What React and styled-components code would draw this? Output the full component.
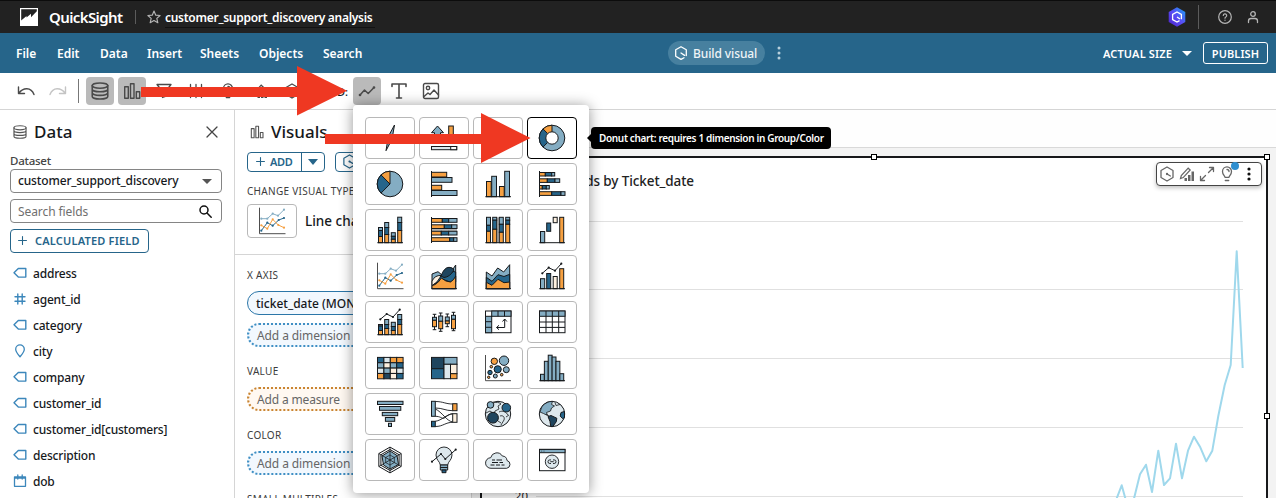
import React from "react";
import styled, { createGlobalStyle, css } from "styled-components";

const LIGHT = "#84adc3";
const DARK = "#26658a";
const ORANGE = "#f6a041";
const NAVY = "#1f455e";
const PALE = "#dde8ed";
const CREAM = "#fdf0df";
const INK = "#16191c";
const BRAND = "#26658a";

const Global = createGlobalStyle`
  * { box-sizing: border-box; }
  html, body { margin: 0; padding: 0; overflow: hidden; background: #fff; }
  body { font-family: "Noto Sans", "Open Sans", sans-serif; font-size: 12px; color: #16191c; }
  svg { display: block; flex: none; }
`;

const Page = styled.div`
  position: relative;
  width: 1276px;
  height: 498px;
  overflow: hidden;
  display: flex;
  flex-direction: column;
`;

const Text = styled.span`
  font-size: ${(p) => p.$size || 12}px;
  font-weight: ${(p) => p.$weight || 500};
  letter-spacing: ${(p) => p.$track || 0}px;
  color: ${(p) => p.$color || "inherit"};
  line-height: 1;
  padding-top: ${(p) => p.$drop || 0}px;
  white-space: nowrap;
`;

/* ---------- top bars ---------- */
const Header = styled.header`
  height: 33px;
  flex: none;
  background: #222;
  border-top: 1px solid #0c0c0c;
  display: flex;
  align-items: center;
  padding: 0 16px 0 20px;
  color: #fff;
`;
const Brand = styled.div`
  display: flex;
  align-items: center;
  gap: 11px;
  width: 115px;
`;
const HeaderRule = styled.div`
  width: 1px;
  height: ${(p) => p.$h}px;
  background: #5c5c5c;
  margin-left: ${(p) => p.$gap || 0}px;
`;
const TitleArea = styled.div`
  display: flex;
  align-items: center;
  gap: 4px;
  margin-left: 11px;
  flex: 1;
`;
const TitleField = styled.div`
  width: 210px;
  height: 22px;
  display: flex;
  align-items: center;
  border-bottom: 1px solid #121212;
`;
const HeaderTools = styled.div`
  display: flex;
  align-items: center;
`;
const HelpSlot = styled.div`
  display: flex;
  gap: 14px;
  margin-left: 19px;
`;

const MenuBar = styled.nav`
  height: 40px;
  flex: none;
  background: ${BRAND};
  display: flex;
  align-items: center;
  padding: 0 8px 0 16px;
  color: #fff;
`;
const MenuItem = styled.div`
  width: ${(p) => p.$w}px;
  padding-left: ${(p) => p.$inset || 0}px;
  display: flex;
`;
const BuildPill = styled.div`
  height: 24px;
  width: 97px;
  border-radius: 12px;
  background: #47809f;
  display: flex;
  align-items: center;
  padding-left: 6px;
  gap: 5px;
  margin-left: 284px;
`;
const MenuEnd = styled.div`
  margin-left: auto;
  display: flex;
  align-items: center;
`;
const PublishButton = styled.div`
  width: 65px;
  height: 22px;
  border: 1px solid #fff;
  border-radius: 3px;
  display: flex;
  align-items: center;
  justify-content: center;
  margin-left: 11px;
`;

const Toolbar = styled.div`
  height: 37px;
  flex: none;
  border-bottom: 1px solid #d5d5d5;
  display: flex;
  align-items: center;
  gap: 4px;
  padding-left: 12px;
  background: #fff;
`;
const ToolButton = styled.div`
  width: 28px;
  height: 28px;
  border-radius: 4px;
  display: flex;
  align-items: center;
  justify-content: center;
  background: ${(p) => (p.$active ? "#bababa" : "transparent")};
`;
const ToolRule = styled.div`
  width: 1px;
  height: 24px;
  background: #777;
  margin: 0 3px 0 2px;
`;
const AddLabel = styled.div`
  width: 39px;
  display: flex;
  justify-content: flex-end;
  padding: 0 1px 0 0;
`;

/* ---------- data pane ---------- */
const Body = styled.div`
  flex: 1;
  min-height: 0;
  display: flex;
`;
const DataPane = styled.aside`
  width: 235px;
  flex: none;
  border-right: 1px solid #d5d5d5;
  padding: 12px 12px 0 10px;
`;
const PaneHead = styled.div`
  display: flex;
  align-items: center;
  height: 20px;
  gap: 7px;
  padding: 0 4px 0 3px;
  svg:last-child:not(:first-child) { margin-left: auto; }
`;
const HeadingText = styled(Text)`
  padding-bottom: 2px;
`;
const DatasetLabel = styled.div`
  height: 27px;
  display: flex;
  align-items: flex-end;
  padding-bottom: 3px;
`;
const FieldBox = styled.div`
  height: 24px;
  border: 1px solid #858585;
  border-radius: 4px;
  display: flex;
  align-items: center;
  justify-content: space-between;
  padding: 0 9px 0 7px;
  margin-bottom: 6px;
`;
const CalcButton = styled.div`
  width: 139px;
  height: 24px;
  border: 1px solid ${BRAND};
  border-radius: 4px;
  display: flex;
  align-items: center;
  gap: 8px;
  padding: 0 0 1px 7px;
  color: ${BRAND};
`;
const FieldList = styled.div`
  padding: 7px 0 0 3px;
`;
const FieldRow = styled.div`
  height: 26px;
  display: flex;
  align-items: center;
  gap: 6px;
`;

/* ---------- visuals pane ---------- */
const VisualsPane = styled.aside`
  width: 237px;
  flex: none;
  border-right: 1px solid #d5d5d5;
  padding-top: 12px;
  overflow: hidden;
`;
const VisualsTop = styled.div`
  height: 133px;
  padding-left: 12px;
  border-bottom: 1px solid #d5d5d5;
`;
const ButtonRow = styled.div`
  display: flex;
  gap: 10px;
  margin-top: 10px;
`;
const SplitButton = styled.div`
  height: 20px;
  width: ${(p) => p.$w}px;
  border: 1px solid ${BRAND};
  border-radius: 4px;
  display: flex;
  align-items: center;
  color: ${BRAND};
`;
const SplitMain = styled.div`
  width: 54px;
  height: 100%;
  border-right: 1px solid ${BRAND};
  display: flex;
  align-items: center;
  gap: 5px;
  padding: 0 0 1px ${(p) => p.$pad || 8}px;
`;
const SplitCaret = styled.div`
  flex: 1;
  display: flex;
  justify-content: center;
`;
const CurrentType = styled.div`
  display: flex;
  align-items: center;
  gap: 8px;
`;
const SectionLabel = styled.div`
  height: ${(p) => p.$h}px;
  display: flex;
  align-items: center;
`;
const Wells = styled.div`
  padding: 12px 12px 0;
`;
const well = {
  filled: css`background: #f2f8fe; border: 1px solid #2b76a8;`,
  dimension: css`background: #f2f8fe; border: 2px dotted #3f8fc4;`,
  measure: css`background: #fff8f1; border: 2px dotted #c98532;`,
};
const Well = styled.div`
  height: 24px;
  border-radius: 12px;
  display: flex;
  align-items: center;
  padding-left: 8px;
  ${(p) => well[p.$kind]}
  & + & { margin-top: 8px; }
`;

/* ---------- canvas ---------- */
const Canvas = styled.main`
  flex: 1;
  min-width: 0;
  background: #f3f3f3;
`;
const SheetTabs = styled.div`
  height: 38px;
  background: #fefefe;
  border-bottom: 1px solid #d9d9d9;
`;
const Visual = styled.section`
  position: relative;
  margin: 8px 8px 0;
  height: 520px;
  border: 2px solid #17181a;
  background: #fff;
`;
const VisualTitle = styled.div`
  height: 46px;
  display: flex;
  align-items: center;
  padding: 2px 0 0 9px;
`;
const Handle = styled.i`
  position: absolute;
  width: 6px;
  height: 6px;
  background: #fff;
  border: 1px solid #000;
  left: ${(p) => p.$x};
  top: ${(p) => p.$y};
`;
const VisualTools = styled.div`
  position: absolute;
  right: 4px;
  top: 4px;
  width: 106px;
  height: 24px;
  border: 1px solid #444;
  border-radius: 4px;
  background: #fff;
  box-shadow: 0 2px 4px rgba(0, 0, 0, 0.25);
  display: flex;
  align-items: center;
  gap: 4px;
  padding-left: 2px;
`;
const Notice = styled.i`
  position: absolute;
  left: 74px;
  top: -1px;
  width: 8px;
  height: 8px;
  border-radius: 50%;
  background: #2f8fd0;
`;

/* ---------- floating parts ---------- */
const Picker = styled.div`
  position: absolute;
  left: 353px;
  top: 105px;
  width: 236px;
  height: 388px;
  padding: 12px;
  border-radius: 4px;
  background: #fff;
  box-shadow: 0 1px 14px rgba(0, 0, 0, 0.42);
  display: grid;
  grid-template-columns: repeat(4, 50px);
  grid-auto-rows: 42px;
  gap: 4px;
`;
const Tile = styled.div`
  width: 50px;
  height: ${(p) => p.$h || 42}px;
  border: 1px solid ${(p) => (p.$active ? "#000" : "#b8b8b8")};
  border-radius: 4px;
  background: #fff;
  display: flex;
  align-items: center;
  justify-content: center;
`;
const Tooltip = styled.div`
  position: absolute;
  left: 591px;
  top: 127px;
  width: 240px;
  height: 22px;
  border-radius: 4px;
  background: #000;
  color: #fff;
  display: flex;
  align-items: center;
  padding-left: 8px;
  &::before {
    content: "";
    position: absolute;
    left: -4px;
    top: 7px;
    border: 4px solid transparent;
    border-left: 0;
    border-right-color: #000;
  }
`;
const Arrows = styled.svg`
  position: absolute;
  left: 0;
  top: 0;
  pointer-events: none;
`;

/* ---------- small icons ---------- */
const Line = ({ w = 16, h = w, c = "#4a4a4a", s = 1.3, vb, children }) => (
  <svg width={w} height={h} viewBox={vb || `0 0 ${w} ${h}`} fill="none" stroke={c} strokeWidth={s} strokeLinecap="round" strokeLinejoin="round">
    {children}
  </svg>
);
const Caret = ({ c, w = 10, h = 5 }) => (
  <svg width={w} height={h} viewBox="0 0 10 5" preserveAspectRatio="none"><path d="M0 0h10L5 5z" fill={c} /></svg>
);
const Database = ({ size = 16, c, s }) => (
  <Line w={size} vb="0 0 16 16" c={c} s={s}>
    <ellipse cx="8" cy="3.2" rx="6.9" ry="2.3" />
    <path d="M1.1 3.2v9.6c0 1.3 3.1 2.3 6.9 2.3s6.9-1 6.9-2.3V3.2M1.1 6.4c0 1.3 3.1 2.3 6.9 2.3s6.9-1 6.9-2.3M1.1 9.6c0 1.3 3.1 2.3 6.9 2.3s6.9-1 6.9-2.3" />
  </Line>
);
const Columns = ({ size = 18, c }) => (
  <Line w={size} vb="0 0 18 18" c={c} s={1.4}>
    <path d="M1.7 4.7h3.6v11.6H1.7zM7.5 1.7H11v14.6H7.5zM13.3 9.7h3.4v6.6h-3.4z" />
  </Line>
);
const Hex = ({ size = 16, c, s = 1.3 }) => (
  <Line w={size} vb="0 0 16 16" c={c} s={s}>
    <path d="M8 1l6 3.5v7L8 15l-6-3.5v-7zM8 8l3.4 2" />
    <circle cx="8" cy="8" r=".5" />
  </Line>
);
const BuildIcon = () => (
  <Line w={14} vb="0 0 14 14" c="#fff">
    <path d="M10 11.8 7 13.4 1.7 10.2V3.8L7 .7l5.3 3.1v5.8M7 7l3.6 2.4" />
  </Line>
);
const Bulb = ({ size = 16, c }) => (
  <Line w={size} vb="0 0 16 16" c={c}>
    <path d="M6 11.3C5.8 9.5 3.5 8.5 3.5 5.4a4.5 4.5 0 0 1 9 0c0 3.1-2.3 4.1-2.5 5.9zM6.3 14.5h3.4M8 3.5c1.2 0 2 .8 2 2" />
  </Line>
);
const EditChart = ({ c = "#666" }) => (
  <svg width="16" height="16" viewBox="0 0 16 16">
    <path d="M1.5 12.5 2.3 9.6 9.2 2.2l2 1.8L4.2 11.6z" fill="none" stroke={c} strokeWidth="1.2" />
    <path d="M5.5 12h2.5v3H5.5zM9 9h2.5v6H9zM12.5 5.5H15V15h-2.5z" fill={c} />
  </svg>
);
const Dots = ({ c, w = 4, h = 14, r = 1.5 }) => (
  <svg width={w} height={h} viewBox="0 0 4 14" fill={c}>
    <circle cx="2" cy="2" r={r} /><circle cx="2" cy="7" r={r} /><circle cx="2" cy="12" r={r} />
  </svg>
);
const Plus = ({ size = 9 }) => (
  <Line w={size} vb="0 0 10 10" c={BRAND} s={1.2}><path d="M5 .6v8.8M.6 5h8.8" /></Line>
);

const FieldIcon = ({ kind }) => {
  const c = "#3c87bb";
  if (kind === "number")
    return <Line w={14} c={c} s={1.4}><path d="M4.8 2v10M9.2 2v10M2 4.8h10M2 9.2h10" /></Line>;
  if (kind === "place")
    return <Line w={14} c={c} s={1.3}><path d="M7 12.8C4.9 10.2 2.7 7.8 2.7 5.2a4.3 4.3 0 0 1 8.6 0c0 2.6-2.2 5-4.3 7.6z" /></Line>;
  if (kind === "date")
    return <Line w={14} c={c} s={1.3}><path d="M1.5 3h11v9.3h-11zM4.8 1v4M9.2 1v4M1.5 4h11" /></Line>;
  return <Line w={14} c={c} s={1.4}><path d="M5.3 2.5h7.5v8.6H5.3L1 6.8z" /></Line>;
};

/* ---------- chart type icons, drawn on a 28 unit grid ---------- */
const R = ({ x, y, X, Y, f }) => <rect x={x} y={y} width={X - x} height={Y - y} fill={f} />;
const Base = () => <path d="M1.3 26.7h25.7" />;
const StackV = ({ x, X, cuts, fills = [LIGHT, DARK, ORANGE] }) =>
  fills.map((f, i) => <R key={i} x={x} X={X} y={cuts[i]} Y={cuts[i + 1]} f={f} />);
const StackH = ({ y, Y, cuts }) =>
  [ORANGE, DARK, LIGHT].map((f, i) => <R key={i} y={y} Y={Y} x={cuts[i]} X={cuts[i + 1]} f={f} />);
const Dotted = ({ pts, c, r = 1.1 }) => (
  <g stroke={c}>
    <polyline points={pts.map((p) => p.join()).join(" ")} fill="none" />
    {pts.map(([x, y]) => <circle key={x} cx={x} cy={y} r={r} fill={c} stroke="none" />)}
  </g>
);
const Slices = () => (
  <>
    <circle cx="14" cy="14" r="12.8" fill={LIGHT} />
    <path d="M14 14 5 23.1A12.8 12.8 0 0 1 5 4.9z" fill={DARK} />
    <path d="M14 14 5 4.9A12.8 12.8 0 0 1 14 1.2z" fill={ORANGE} />
  </>
);
const HEAT = [
  [DARK, PALE, ORANGE, ORANGE],
  [LIGHT, CREAM, LIGHT, DARK],
  [PALE, LIGHT, CREAM, PALE],
  [ORANGE, NAVY, CREAM, DARK],
];
const hex = (r) =>
  [0, 1, 2, 3, 4, 5].map((k) => {
    const a = (Math.PI / 3) * k - Math.PI / 2;
    return `${(14 + r * Math.cos(a)).toFixed(2)},${(14 + r * Math.sin(a)).toFixed(2)}`;
  }).join(" ");

const LineGlyph = () => (
  <>
    <path d="M1.5 .7v26h26" stroke="#4d4d4d" fill="none" />
    <Dotted c={LIGHT} pts={[[3.3, 11.7], [9.3, 11.7], [14.7, 6.7], [20, 8.7], [26, 2.7]]} />
    <Dotted c={DARK} pts={[[3.3, 23.7], [9.3, 15.7], [14.7, 18.7], [20.7, 13], [26, 11]]} />
    <Dotted c={ORANGE} pts={[[3.3, 18.3], [9.3, 21.7], [14.7, 12.3], [20.3, 18], [26, 20.7]]} />
  </>
);

const GLYPHS = [
  <path d="M18.5 1 12.3 12.5 10 26.7l6-11.5z" fill={LIGHT} />,
  <>
    <path d="M7.5 2 13.5 8.7h-3V18h-6V8.7h-3z" fill={LIGHT} />
    <R x={18.7} X={23.3} y={2} Y={18} f={ORANGE} />
    <R x={1.5} X={26.7} y={22.5} Y={25.7} f={PALE} />
    <R x={20.7} X={26.7} y={22.5} Y={25.7} f="#fff" />
  </>,
  <><path d="M4 12h20v5H4z" fill={LIGHT} /></>,
  <><Slices /><circle cx="14" cy="14" r="6.2" fill="#fff" /></>,

  <Slices />,
  <>
    <R x={1.5} X={16.7} y={2.3} Y={7} f={ORANGE} /><R x={1.5} X={22} y={7.5} Y={12.3} f={LIGHT} />
    <R x={1.5} X={11.7} y={15.3} Y={20} f={ORANGE} /><R x={1.5} X={27} y={20.5} Y={25.5} f={LIGHT} />
    <path d="M1.5 1v26" />
  </>,
  <>
    <R x={2.5} X={7.2} y={11.5} Y={26.7} f={ORANGE} /><R x={7.7} X={12.5} y={6.3} Y={26.7} f={LIGHT} />
    <R x={15.5} X={20.2} y={16.5} Y={26.7} f={ORANGE} /><R x={20.7} X={25.5} y={1.3} Y={26.7} f={LIGHT} />
    <Base />
  </>,
  <>
    <StackH y={2.5} Y={6} cuts={[1.5, 7.3, 13.7, 16.7]} /><StackH y={8.8} Y={12.4} cuts={[1.5, 9.3, 17, 21.7]} />
    <StackH y={15.5} Y={19} cuts={[1.5, 4.3, 8.3, 11.3]} /><StackH y={21.7} Y={25.4} cuts={[1.5, 13.7, 23, 27]} />
    <path d="M1.5 1v26" />
  </>,

  <>
    <StackV x={2.5} X={6.5} cuts={[11.5, 14.5, 20.5, 26.7]} /><StackV x={8.7} X={12.7} cuts={[6.5, 11.5, 18.5, 26.7]} />
    <StackV x={15.3} X={19.3} cuts={[16.7, 20.3, 23.3, 26.7]} /><StackV x={21.7} X={25.7} cuts={[1.2, 6.5, 14.5, 26.7]} />
    <Base />
  </>,
  <>
    <path d="M2 14h25" stroke="#b3b3b3" strokeWidth="2.5" />
    <StackH y={2.5} Y={6.3} cuts={[1.5, 12.3, 18.7, 27]} /><StackH y={8.8} Y={12.5} cuts={[1.5, 14.3, 21.7, 27]} />
    <StackH y={15.3} Y={19} cuts={[1.5, 11.3, 18.7, 27]} /><StackH y={21.7} Y={25.4} cuts={[1.5, 19.7, 23.7, 27]} />
    <path d="M1.5 1v26" />
  </>,
  <>
    <path d="M14 1.5v25" stroke="#b3b3b3" strokeWidth="2.5" />
    <StackV x={2.5} X={6.5} cuts={[1.3, 9.3, 15.3, 26.7]} /><StackV x={8.7} X={12.7} cuts={[1.3, 4.2, 13.3, 26.7]} />
    <StackV x={15.3} X={19.3} cuts={[1.3, 8.3, 16.3, 26.7]} /><StackV x={21.7} X={25.7} cuts={[1.3, 4.2, 8.3, 26.7]} />
    <Base />
  </>,
  <>
    <R x={2.5} X={6.7} y={15.5} Y={26.7} f={LIGHT} /><R x={8.7} X={12.7} y={7} Y={15.3} f={DARK} />
    <R x={15.2} X={19.2} y={1.3} Y={6.7} f={CREAM} /><R x={21.7} X={25.7} y={1.3} Y={26.7} f={ORANGE} />
    <Base />
  </>,

  <LineGlyph />,
  <>
    <path d="M2 12 8 9.7 12 13 17 16 25.7 3v23.7H2z" fill={LIGHT} />
    <path d="M2 19Q5 13 11 13.5L10 19 2 23.5z" fill={CREAM} />
    <path d="M2 24Q8 20 11 14 17 7 25.7 10v10L20 20 12 17z" fill={DARK} />
    <path d="M11 14Q14 5.5 19 5.3 23 5.3 24 8 20 15 14 15.5z" fill={NAVY} />
    <path d="M2 23.5Q7 23 11.3 16 16 20 20.5 20 24 18 25.7 14v12.7H2z" fill={ORANGE} />
    <Base />
  </>,
  <>
    <path d="M2.3 10 8 14 13.7 6l6 4 6-7.3v24H2.3z" fill={LIGHT} />
    <path d="M2.3 15.3 8 19.3l6-6.6 6 1.8 5.7-2.2v14.4H2.3z" fill={DARK} />
    <path d="M2.3 20.3 8 23.3l6-6 6 3.4 5.7-.7v6.7H2.3z" fill={ORANGE} />
    <Base />
  </>,
  <>
    <R x={2.5} X={6.7} y={16.7} Y={26.7} f={LIGHT} /><R x={8.7} X={12.7} y={11.5} Y={26.7} f={DARK} />
    <R x={15.2} X={19.2} y={14.5} Y={26.7} f={CREAM} /><R x={21.7} X={25.7} y={6.7} Y={26.7} f={ORANGE} />
    <Base /><Dotted c={INK} pts={[[4.3, 11.3], [10.7, 5.7], [17, 8.7], [23.3, 1.7]]} />
  </>,

  <>
    <StackV x={2.5} X={6.5} cuts={[16.5, 18, 22.5, 26.7]} /><StackV x={8.7} X={12.7} cuts={[11.5, 16.5, 20.5, 26.7]} />
    <StackV x={15.3} X={19.3} cuts={[14.3, 18.5, 22.5, 26.7]} /><StackV x={21.7} X={25.7} cuts={[6.5, 11.5, 16.5, 26.7]} />
    <Base /><Dotted c={INK} pts={[[4.3, 11.3], [10.7, 6], [17, 9], [23.7, 1.7]]} />
  </>,
  <>
    {[[4.5, 6.3, 9.3, 12.3, 18.7, 21.7], [10.7, 5, 8, 13.3, 20.7, 23.3], [17.3, 6, 9, 13, 15.7, 18.7], [23.5, 4.3, 7.3, 11.3, 20.7, 22.7]].map(([x, a, b, m, d, e]) => (
      <g key={x}>
        <path d={`M${x} ${a}V${e}M${x - 1.8} ${a}h3.6M${x - 1.8} ${e}h3.6`} />
        <R x={x - 2} X={x + 2} y={b} Y={m} f={LIGHT} /><R x={x - 2} X={x + 2} y={m} Y={d} f={ORANGE} />
      </g>
    ))}
  </>,
  <>
    <R x={1.5} X={27} y={3} Y={24.7} f="#fff" /><R x={7.7} X={27} y={3} Y={8.3} f={LIGHT} /><R x={1.5} X={7.7} y={8.3} Y={24.7} f={LIGHT} />
    <path d="M14 3v5.3M20.5 3v5.3M1.5 13.7h6.2M1.5 19.3h6.2" />
    <path d="M12.7 19.5h8V11.3M15 17.3l-2.5 2.2L15 21.7M18.5 13.5l2.2-2.5 2.2 2.5" fill="none" />
  </>,
  <>
    <R x={1.5} X={27} y={3} Y={24.7} f="#fff" /><R x={1.5} X={27} y={3} Y={8.3} f={LIGHT} />
    <path d="M8 3v21.7M14.3 3v21.7M20.7 3v21.7M1.5 14H27M1.5 19.4H27" />
  </>,

  <>{HEAT.map((row, j) => row.map((f, i) => <R key={`${j}${i}`} x={1.5 + i * 6.4} X={7.9 + i * 6.4} y={3.4 + j * 5.35} Y={8.75 + j * 5.35} f={f} />))}</>,
  <>
    <R x={1.5} X={14} y={3.4} Y={14.7} f={NAVY} /><R x={14} X={27} y={3.4} Y={10.3} f={LIGHT} /><R x={1.5} X={14} y={14.7} Y={24.7} f={DARK} />
    <R x={14} X={20.5} y={10.3} Y={24.7} f={PALE} /><R x={20.5} X={27} y={10.3} Y={19.7} f={CREAM} /><R x={20.5} X={27} y={19.7} Y={24.7} f={ORANGE} />
  </>,
  <>
    <path d="M1.5 1v25.7H27" fill="none" stroke="#4d4d4d" />
    {[[10.3, 7.3, 3.2, ORANGE], [20, 6.7, 4.7, LIGHT], [7.3, 12.7, 1.3, ORANGE], [13.7, 15.3, 3.6, DARK], [22.3, 15.7, 3, LIGHT], [6, 18.5, 2.2, DARK], [17.7, 20.7, 1.3, ORANGE], [11.3, 22, 2, LIGHT], [4.7, 23.3, 1.2, ORANGE]].map(([x, y, r, f]) => (
      <circle key={x} cx={x} cy={y} r={r} fill={f} />
    ))}
  </>,
  <>
    {[20.3, 7.3, 1.2, 3, 7.3, 19.7].map((y, i) => <R key={i} x={2.5 + i * 3.87} X={6.37 + i * 3.87} y={y} Y={26.7} f={LIGHT} />)}
    <Base />
  </>,

  <>
    <R x={1.5} X={27} y={1.3} Y={4.5} f={LIGHT} /><R x={3.5} X={24.8} y={6.5} Y={10.3} f={LIGHT} /><R x={6.3} X={21.7} y={12.4} Y={15.7} f={LIGHT} />
    <R x={9.4} X={18.7} y={17.5} Y={21.3} f={LIGHT} /><R x={12.5} X={15.5} y={23.3} Y={26.5} f={LIGHT} />
  </>,
  <>
    <path d="M5.3 1.5c8 0 10 2.5 17.4 2.5M5.3 8C13 8 15 10.7 22.7 10.7M5.3 9c7 3 11 12 17.4 13M5.3 21.3c7-1 11-7 17.4-7.5M5.3 16.3c5 0 6 2 8 2s4-4 9.4-4.6M5.3 26.5c8 0 10-4.2 17.4-4.2" fill="none" strokeWidth=".9" />
    <R x={1.5} X={5.3} y={1.3} Y={16.3} f={LIGHT} /><R x={1.5} X={5.3} y={21.3} Y={26.7} f={DARK} />
    <R x={22.7} X={27} y={3.7} Y={10.7} f={ORANGE} /><R x={22.7} X={27} y={13.7} Y={22.3} f={CREAM} />
  </>,
  <>
    <circle cx="14" cy="14" r="12.7" fill={PALE} />
    <path d="M9 3c3-1 6-1 8 1l-3 2 1 3-4 2-1 3M2 13l4-2 3 2M15 12c4-2 7 0 9 3M16 16c3-1 5 1 4 4l-3 5M14 21l3 2M25 15l-3 2" fill="none" strokeWidth=".8" />
    <circle cx="6.5" cy="4.9" r="3.3" fill={LIGHT} /><circle cx="22.3" cy="7.7" r="4.3" fill={DARK} /><circle cx="9" cy="17.7" r="5.4" fill={NAVY} />
  </>,
  <>
    <circle cx="14" cy="14" r="12.7" fill={PALE} />
    <path d="M4 6.5C7 3 11 1.2 14.5 1.4l-1 3 3 1.6-3 2-1 3-4 1.5 1 3-4-2-3.5-1.5z" fill={LIGHT} strokeWidth=".8" />
    <path d="M17 2.5l1 3 4-1M8 14l3 2" fill="none" strokeWidth=".8" />
    <path d="M26.5 11.5 23 12.5l-.8 3.5 2.3 2.5 2-.8z" fill={DARK} />
    <path d="M10 16.5l3-1 5.8 2.7-.5 3.5-3.5 4.8h-2l-.8-5z" fill={NAVY} />
  </>,

  <>
    <polygon points={hex(12.9)} fill="#fff" /><polygon points={hex(10.5)} fill="#fff" />
    <polygon points="14,5 21,9.5 22.5,18.5 14,23 7.5,19 6,10" fill={LIGHT} />
    <polygon points={hex(5)} fill="none" strokeWidth=".7" />
    <path d="M14 1v26M2.8 7.5l22.4 13M25.2 7.5l-22.4 13" fill="none" strokeWidth=".8" />
  </>,
  <>
    <path d="M10.3 19C10 15.5 6 14 6 9a8 8 0 0 1 16 0c0 5-4 6.5-4.3 10z" fill={PALE} strokeWidth=".9" />
    <path d="M10.3 19h7.4v5h-7.4z" fill={LIGHT} /><path d="M10.3 21.5h7.4M12 24h4v2.7h-4z" fill={DARK} />
    <Dotted c={INK} pts={[[2, 15.7], [11, 8], [15.3, 13], [25.7, 3.7]]} />
  </>,
  <>
    <path d="M7 22.3a5.3 5.3 0 0 1-.3-10.6A6.3 6.3 0 0 1 18.3 10 5 5 0 0 1 23 14.5a4 4 0 0 1-.3 7.8z" fill={PALE} strokeWidth=".9" />
    <path d="M8 14h3M12.5 14h5.5M8 16.5h6M15.5 16.5h3.5M6.5 19h4M12 19h4M17.5 19h3" />
  </>,
  <>
    <R x={1.5} X={27} y={3.4} Y={24.7} f="#fff" /><R x={1.5} X={27} y={3.4} Y={6.7} f={LIGHT} />
    <path d="M3.5 5.1h.6M5.7 5.1h.6" />
    <circle cx="14" cy="15.7" r="6.7" fill={PALE} strokeWidth=".9" />
    <path d="M13 13.9h-1.2a1.8 1.8 0 0 0 0 3.6H13M15 13.9h1.2a1.8 1.8 0 0 1 0 3.6H15M12.3 15.7h3.4" fill="none" strokeWidth=".9" />
  </>,
];
const Glyph = ({ children, w = 28 }) => (
  <svg width={w} height={w} viewBox="0 0 28 28" stroke={INK} strokeWidth="1" fill="none">{children}</svg>
);

const MENU = [["File", 41], ["Edit", 43], ["Data", 47], ["Insert", 53], ["Sheets", 59], ["Objects", 64], ["Search", 61]];
const FIELDS = [
  ["address"], ["agent_id", "number"], ["category"], ["city", "place"], ["company"],
  ["customer_id"], ["customer_id[customers]"], ["description"], ["dob", "date"],
];
const SERIES = [
  [110, 1075], [125, 1036], [140, 1090], [156, 1100], [180, 1003], [198, 974], [216, 1056], [235, 932], [252, 1035], [270, 1015], [288, 911],
  [306, 1015], [324, 932], [342, 890], [361, 922], [379, 964], [397, 932], [415, 828], [434, 735], [452, 675], [470, 334], [488, 684],
].map(([x, y]) => `${(x / 3 + 598).toFixed(1)},${(y / 3 - 64).toFixed(1)}`).join(" ");

const Caption = ({ children, h, drop = 0 }) => (
  <SectionLabel $h={h}><Text $size={10} $weight={400} $track={0.3} $drop={drop} $color="#3c3c3c">{children}</Text></SectionLabel>
);

export default function App() {
  return (
    <Page>
      <Global />
      <Header>
        <Brand>
          <svg width="18" height="18" viewBox="0 0 18 18">
            <path d="M0 0h18v18H0z" fill="#fff" />
            <path d="M1.2 1.2h15.6v2L11 9.2V5.8L6.5 9.5V8L1.2 12.5z" fill="#222" />
          </svg>
          <Text $size={15} $weight={600} $track={-0.6}>QuickSight</Text>
        </Brand>
        <HeaderRule $h={14} />
        <TitleArea>
          <Line w={14} vb="0 0 16 16" c="#b5b5b5"><path d="M8 1.2l2 4.7 5 .4-3.8 3.3 1.2 5L8 12l-4.4 2.6 1.2-5L1 6.3l5-.4z" /></Line>
          <TitleField><Text $size={12} $weight={600} $track={-0.28} $drop={2}>customer_support_discovery analysis</Text></TitleField>
        </TitleArea>
        <HeaderTools>
          <svg width="18" height="20" viewBox="0 0 18 20">
            <defs><linearGradient id="q" x1="0" y1="1" x2="1" y2="0"><stop offset="0" stopColor="#4b1fc4" /><stop offset=".5" stopColor="#5a4df5" /><stop offset="1" stopColor="#19a5f5" /></linearGradient></defs>
            <path d="M9 .3l8.3 4.6v10.2L9 19.7.7 15.1V4.9z" fill="url(#q)" />
            <path d="M11.5 13.7 9 15 4.6 12.5v-5L9 5l4.4 2.5v4.7M9 10l3 2" fill="none" stroke="#fff" strokeWidth="1.3" />
          </svg>
          <HeaderRule $h={24} $gap={12} />
          <HelpSlot>
            <Line w={14} c="#b5b5b5" s={1.2}><circle cx="7" cy="7" r="6.3" /><path d="M5.3 5.5a1.7 1.7 0 1 1 2.5 1.5c-.6.3-.8.6-.8 1.2M7 10v.3" /></Line>
            <Line w={14} c="#b5b5b5" s={1.3}><circle cx="7" cy="4" r="2.3" /><path d="M2.5 12.5V11c0-1.5 1-2.5 2.5-2.5h4c1.5 0 2.5 1 2.5 2.5v1.5" /></Line>
          </HelpSlot>
        </HeaderTools>
      </Header>

      <MenuBar>
        {MENU.map(([m, w]) => (
          <MenuItem key={m} $w={w}><Text $weight={600} $drop={2}>{m}</Text></MenuItem>
        ))}
        <BuildPill><BuildIcon /><Text $track={-0.1} $drop={2} $color="#eef4f7">Build visual</Text></BuildPill>
        <MenuItem $w={30} $inset={12}><Dots c="#b9d0dc" /></MenuItem>
        <MenuEnd>
          <Text $size={11} $weight={600} $track={0.15}>ACTUAL SIZE</Text>
          <MenuItem $w={20} $inset={10}><Caret c="#fff" /></MenuItem>
          <PublishButton><Text $size={11} $weight={600} $track={0.1}>PUBLISH</Text></PublishButton>
        </MenuEnd>
      </MenuBar>

      <Toolbar>
        <ToolButton><Line w={18} vb="0 0 18 18" s={1.4}><path d="M1.5 5v6.5h6M2 11C6 5.5 14 4.5 17 12.5" /></Line></ToolButton>
        <ToolButton><Line w={18} vb="0 0 18 18" s={1.4} c="#c4c4c4"><path d="M16.5 5v6.5h-6M16 11C12 5.5 4 4.5 1 12.5" /></Line></ToolButton>
        <ToolRule />
        <ToolButton $active><Database size={18} s={1.4} /></ToolButton>
        <ToolButton $active><Columns /></ToolButton>
        <ToolButton><Line w={16}><path d="M1 1.5h14L9.5 8.5v5l-3 1v-6z" /></Line></ToolButton>
        <ToolButton><Line w={16}><path d="M2.5 1.5v13M8 1.5v13M13.5 1.5v13M1 5h3M6.5 10h3M12 6h3" /></Line></ToolButton>
        <ToolButton><Bulb /></ToolButton>
        <ToolButton><EditChart c="#4a4a4a" /></ToolButton>
        <ToolButton><Hex c="#4a4a4a" /></ToolButton>
        <AddLabel><Text $size={11}>ADD:</Text></AddLabel>
        <ToolButton $active><Line w={18} vb="0 0 18 18" s={1.5}><path d="M2 13l4.5-5 3.7 3.5L16 5.5" /><circle cx="2" cy="13" r=".6" /><circle cx="16" cy="5.5" r=".6" /></Line></ToolButton>
        <ToolButton><Line w={18} vb="0 0 18 18" s={1.6}><path d="M2 4.5V2h14v2.5M9 2v14M6.5 16h5" /></Line></ToolButton>
        <ToolButton><Line w={18} vb="0 0 18 18" s={1.4}><rect x="1.5" y="1.5" width="15" height="15" rx="1.5" /><circle cx="6" cy="6" r="1.7" /><path d="M2 14.5l4-3.5 2 1.5L12 8l4.5 5" /></Line></ToolButton>
      </Toolbar>

      <Body>
        <DataPane>
          <PaneHead>
            <Database size={14} c="#555" />
            <HeadingText $size={17}>Data</HeadingText>
            <Line w={12} c="#444"><path d="M1 1l10 10M11 1 1 11" /></Line>
          </PaneHead>
          <DatasetLabel><Text $size={11.5} $track={-0.25} $color="#444">Dataset</Text></DatasetLabel>
          <FieldBox><Text $track={-0.15}>customer_support_discovery</Text><Caret c="#555" /></FieldBox>
          <FieldBox>
            <Text $weight={400} $track={-0.08} $drop={1} $color="#6f6f6f">Search fields</Text>
            <Line w={13} c="#111" s={1.5}><circle cx="5" cy="5" r="4" /><path d="M8 8l4.2 4.2" /></Line>
          </FieldBox>
          <CalcButton><Plus /><Text $size={11} $weight={600} $track={0.2}>CALCULATED FIELD</Text></CalcButton>
          <FieldList>
            {FIELDS.map(([name, kind]) => (
              <FieldRow key={name}><FieldIcon kind={kind} /><Text $track={-0.2} $drop={1}>{name}</Text></FieldRow>
            ))}
          </FieldList>
        </DataPane>

        <VisualsPane>
          <VisualsTop>
            <PaneHead><Columns size={14} c="#555" /><HeadingText $size={17}>Visuals</HeadingText></PaneHead>
            <ButtonRow>
              <SplitButton $w={78}>
                <SplitMain><Plus /><Text $size={11} $weight={600} $track={-0.3}>ADD</Text></SplitMain>
                <SplitCaret><Caret c={BRAND} h={6} /></SplitCaret>
              </SplitButton>
              <SplitButton $w={70}><SplitMain $pad={6}><Hex size={15} c={BRAND} /></SplitMain></SplitButton>
            </ButtonRow>
            <Caption h={32} drop={6}>CHANGE VISUAL TYPE</Caption>
            <CurrentType><Tile $h={34}><Glyph w={28}><LineGlyph /></Glyph></Tile><Text $size={13.5} $drop={2}>Line chart</Text></CurrentType>
          </VisualsTop>
          <Wells>
            <Caption h={16}>X AXIS</Caption>
            <SectionLabel $h={8} />
            <Well $kind="filled"><Text $drop={2}>ticket_date (MONTH)</Text></Well>
            <Well $kind="dimension"><Text $weight={400} $track={-0.1} $drop={2} $color="#666">Add a dimension</Text></Well>
            <SectionLabel $h={16} />
            <Caption h={16}>VALUE</Caption>
            <SectionLabel $h={8} />
            <Well $kind="measure"><Text $weight={400} $track={-0.15} $drop={2} $color="#666">Add a measure</Text></Well>
            <SectionLabel $h={16} />
            <Caption h={16}>COLOR</Caption>
            <SectionLabel $h={8} />
            <Well $kind="dimension"><Text $weight={400} $track={-0.1} $drop={2} $color="#666">Add a dimension</Text></Well>
            <SectionLabel $h={16} />
            <Caption h={16}>SMALL MULTIPLES</Caption>
          </Wells>
        </VisualsPane>

        <Canvas>
          <SheetTabs />
          <Visual>
            <VisualTitle><Text $size={13.5} $track={-0.1} $color="#222">Count of Records by Ticket_date</Text></VisualTitle>
            <svg width="784" height="320" viewBox="0 0 784 320">
              <g stroke="#e0e0e0" strokeWidth="1">
                {[17.5, 85.5, 154.5, 223.5, 292.5].map((y) => <path key={y} d={`M54 ${y}H761`} />)}
              </g>
              <text x="46" y="296" textAnchor="end" fontSize="11.5" fill="#222">20</text>
              <polyline points={SERIES} fill="none" stroke="#9fd8ec" strokeWidth="2" strokeLinejoin="round" />
            </svg>
            <Handle $x="389px" $y="-4px" />
            <Handle $x="782px" $y="-4px" />
            <Handle $x="782px" $y="255px" />
            <VisualTools>
              <Hex c="#666" /><EditChart />
              <Line w={16} c="#666"><path d="M9.5 6.5 14.5 1.5M10.5 1.5h4v4M6.5 9.5l-5 5M1.5 10.5v4h4" /></Line>
              <Bulb c="#666" />
              <MenuItem $w={16} $inset={8}><Dots c="#111" r={1.6} /></MenuItem>
              <Notice />
            </VisualTools>
          </Visual>
        </Canvas>
      </Body>

      <Picker>
        {GLYPHS.map((g, i) => <Tile key={i} $active={i === 3}><Glyph>{g}</Glyph></Tile>)}
      </Picker>
      <Tooltip><Text $size={10} $weight={600} $track={-0.34}>Donut chart: requires 1 dimension in Group/Color</Text></Tooltip>
      <Arrows width="1276" height="498" viewBox="0 0 1276 498" fill="#ef3822">
        <path d="M141 87h156V66l50 24.8-50 24.8V97H141z" />
        <path d="M325 134h156v-21l49.5 25L481 163v-19H325z" />
      </Arrows>
    </Page>
  );
}
